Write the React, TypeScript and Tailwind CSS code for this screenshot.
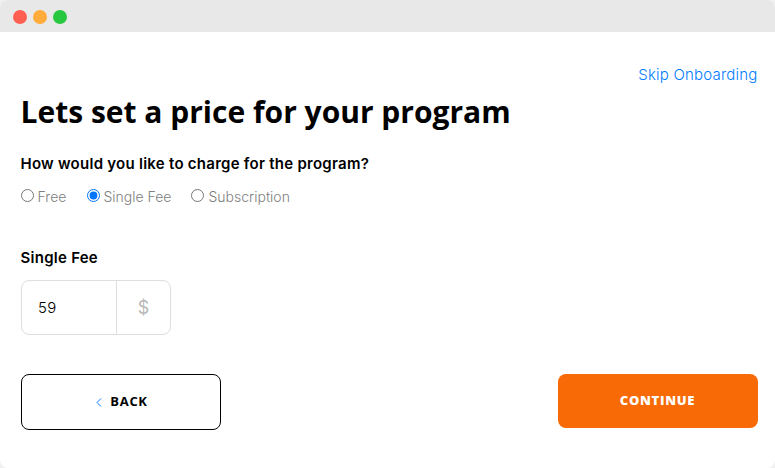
import React from 'react';

const feeTypes = ['Free', 'Single Fee', 'Subscription'];

const WindowBar = () => (
  <div className="flex h-8 items-center gap-[6px] bg-[#e8e8e8] pl-[13px] pt-[2px]">
    <span className="h-[14px] w-[14px] rounded-full bg-[#ff5f52]" />
    <span className="h-[14px] w-[14px] rounded-full bg-[#ffac3b]" />
    <span className="h-[14px] w-[14px] rounded-full bg-[#27c840]" />
  </div>
);

const App: React.FC = () => {
  const [feeType, setFeeType] = React.useState('Single Fee');
  const [price, setPrice] = React.useState('59');
  return (
    <div className="bg-[#f0f0f0]">
      <div className="h-[468px] w-[775px] overflow-hidden rounded-lg bg-white font-['Inter',sans-serif]">
        <WindowBar />
        <div className="flex flex-col pl-[21px] pr-[17px] pt-8">
          <a
            href="#"
            className="mr-[0.5px] self-end text-[15px] leading-[22px] font-light tracking-[0.2px] text-[#007bff]"
          >
            Skip Onboarding
          </a>
          <h1 className="-ml-[0.5px] mt-[5px] font-['Open_Sans',sans-serif] text-[30px] leading-[42px] font-bold text-black">
            Lets set a price for your program
          </h1>
          <p className="-ml-[0.5px] mt-[21px] text-[15px] leading-5 font-semibold tracking-[0.26px] text-black">
            How would you like to charge for the program?
          </p>
          <div className="mt-3 flex h-5 items-center gap-[20.4px]">
            {feeTypes.map((type) => (
              <label
                key={type}
                className="flex items-center gap-[3.6px] text-[14px] font-light text-[#808080] last:-ml-[0.5px] last:gap-[4.2px]"
              >
                <input
                  type="radio"
                  name="fee"
                  checked={feeType === type}
                  onChange={() => setFeeType(type)}
                  className="mb-[2px] h-[13px] w-[13px]"
                />
                {type}
              </label>
            ))}
          </div>
          <p className="-ml-[0.5px] mt-[42px] text-[15px] leading-5 font-semibold tracking-[0.26px] text-black">
            Single Fee
          </p>
          <div className="mt-3 flex h-[55px] w-[150px] rounded-lg border border-[#dedede]">
            <input
              value={price}
              onChange={(e) => setPrice(e.target.value)}
              className="w-[94px] pt-px pl-4 text-[15px] font-light tracking-[0.25px] text-black outline-none"
            />
            <span className="flex flex-1 items-center justify-center border-l border-[#dedede] text-[18px] text-[#b8b8b8]">
              $
            </span>
          </div>
          <div className="mt-[39px] flex justify-between font-['Open_Sans',sans-serif] text-[13px] font-bold">
            <button className="flex h-14 w-[200px] items-center justify-center gap-2 rounded-lg border border-black pl-[2px] tracking-[0.7px] text-black">
              <svg width="6" height="9" viewBox="0 0 6 9" fill="none" stroke="#007bff">
                <path d="M5 .5 1 4.5l4 4" />
              </svg>
              BACK
            </button>
            <button className="h-[54px] w-[200px] rounded-lg bg-[#f76a05] pr-px font-extrabold tracking-[0.7px] text-white">
              CONTINUE
            </button>
          </div>
        </div>
      </div>
    </div>
  );
};

export default App;
